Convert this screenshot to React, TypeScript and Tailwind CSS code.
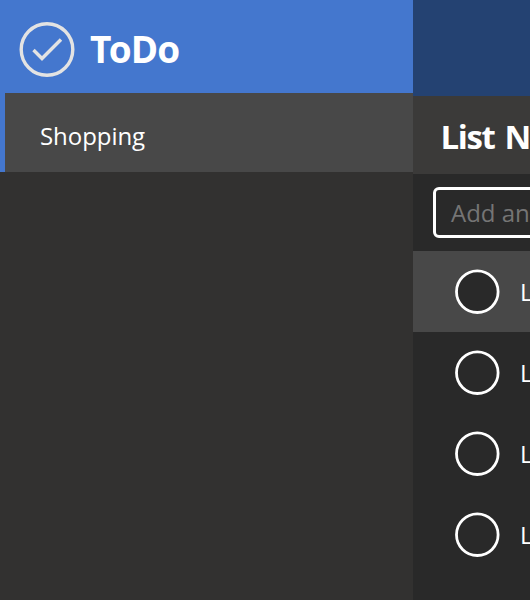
const items = ["List Item 1", "List Item 2", "List Item 3", "List Item 4"];

export default function App() {
  return (
    <div className="flex h-[600px] w-[530px] overflow-hidden bg-[#292929] font-['Open_Sans',sans-serif] text-white">
      <aside className="flex w-[412.6px] shrink-0 flex-col bg-[#323130]">
        <header className="flex h-[93px] items-center bg-[#4477ce] pl-[19px] pt-[5px]">
          <svg className="size-14 shrink-0" viewBox="0 0 56 56" fill="none" stroke="#e3e3e3" strokeWidth="3.4">
            <circle cx="28" cy="28.5" r="25.8" />
            <path d="M14.5 29l8.5 8.5L42 18.5" />
          </svg>
          <h1 className="ml-[15px] pb-[2px] text-[37px] font-bold leading-none tracking-[-0.8px]">
            <span className="tracking-[-2.8px]">T</span>oDo
          </h1>
        </header>
        <div className="flex h-[79px] items-center border-l-[5px] border-[#4477ce] bg-[#484848] pl-[35px] pt-[7px] text-2xl tracking-[-0.05px]">
          Shopping
        </div>
      </aside>
      <main className="flex w-[500px] shrink-0 flex-col">
        <div className="h-24 bg-[#244272]" />
        <h2 className="flex h-[78px] items-center bg-[#3b3a39] pl-7 pt-[3px] text-[33px] font-bold tracking-[-1.4px] [word-spacing:3px]">
          List Name
        </h2>
        <div className="h-[76.5px] pl-[20.4px] pt-[13px]">
          <div className="flex h-[51px] w-[440px] items-center rounded-md border-[3px] border-white pl-[15px] text-2xl text-[#757575]">
            Add an item
          </div>
        </div>
        {items.map((item, i) => (
          <div key={item} className={"flex h-[81.1px] items-center pl-[42.4px] text-2xl " + (i === 0 ? "bg-[#484848]" : "")}>
            <svg className="size-[45px] shrink-0" viewBox="0 0 45 45">
              <circle cx="22.3" cy="22.7" r="20.8" fill="#292929" stroke="white" strokeWidth="2.8" />
            </svg>
            <span className="ml-5 pt-[2px]">{item}</span>
          </div>
        ))}
      </main>
    </div>
  );
}
